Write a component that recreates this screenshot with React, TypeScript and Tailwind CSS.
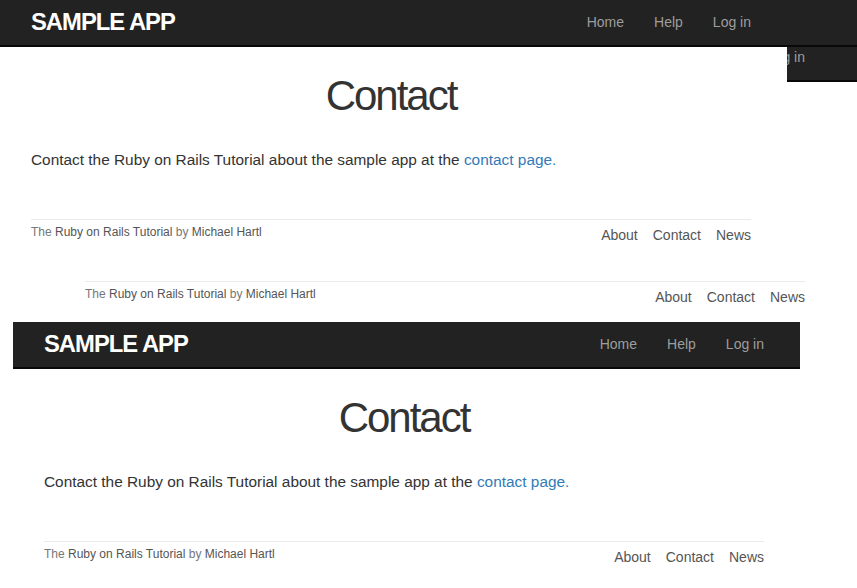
const NAV_LINKS = ['Home', 'Help', 'Log in'];
const FOOTER_LINKS = ['About', 'Contact', 'News'];

function Navbar({ full = false }: { full?: boolean }) {
  return (
    <header className={`h-[47px] bg-[#222] border-b-2 border-[#080808] ${full ? 'w-full' : 'w-[787px]'}`}>
      <div className="w-[787px] h-full flex items-start justify-between pl-[31px] pr-[36px]">
        <a className="text-white font-bold uppercase text-[23.8px] tracking-[-1px] leading-none pt-[10px]">
          Sample App
        </a>
        <nav className="flex gap-[30px] text-[14px] leading-5 text-[#9d9d9d] pt-[12px]">
          {NAV_LINKS.map((l) => (
            <a key={l}>{l}</a>
          ))}
        </nav>
      </div>
    </header>
  );
}

function Footer() {
  return (
    <footer className="mx-[31px] w-[720px] border-t border-[#eaeaea] flex items-start justify-between pt-[4px]">
      <small className="text-[12px] leading-4 text-[#777]">
        The <a className="text-[#555]">Ruby on Rails Tutorial</a> by <a className="text-[#555]">Michael Hartl</a>
      </small>
      <ul className="flex gap-[15px] text-[14px] leading-5 text-[#555] mt-[1px]">
        {FOOTER_LINKS.map((l) => (
          <li key={l}>{l}</li>
        ))}
      </ul>
    </footer>
  );
}

function Main() {
  return (
    <main className="pt-[26px] pl-[31px] pr-[36px]">
      <h1 className="text-center text-[42px] leading-[1.1] tracking-[-2px] text-[#333] font-normal">
        Contact
      </h1>
      <p className="mt-[28px] text-[15.4px] leading-[1.7] text-[#333]">
        Contact the Ruby on Rails Tutorial about the sample app at the{' '}
        <a className="text-[#337ab7]">contact page.</a>
      </p>
    </main>
  );
}

export default function App() {
  return (
    <div className="relative w-[857px] h-[588px] overflow-hidden bg-white font-['Liberation_Sans',Arial,sans-serif]">
      {/* window behind: only its navbar edge and footer show */}
      <div className="absolute left-[54px] top-[35px] w-[803px] bg-white">
        <Navbar full />
        <div className="h-[199px]" />
        <Footer />
      </div>

      {/* front window */}
      <div className="absolute left-0 top-0 w-full">
        <Navbar full />
        <div className="w-[787px] h-[203px] bg-white">
          <Main />
          <div className="mt-[46px]">
            <Footer />
          </div>
        </div>
      </div>

      {/* lower window */}
      <div className="absolute left-[13px] top-[322px] w-[787px] bg-white">
        <Navbar />
        <Main />
        <div className="mt-[46px]">
          <Footer />
        </div>
      </div>
    </div>
  );
}
